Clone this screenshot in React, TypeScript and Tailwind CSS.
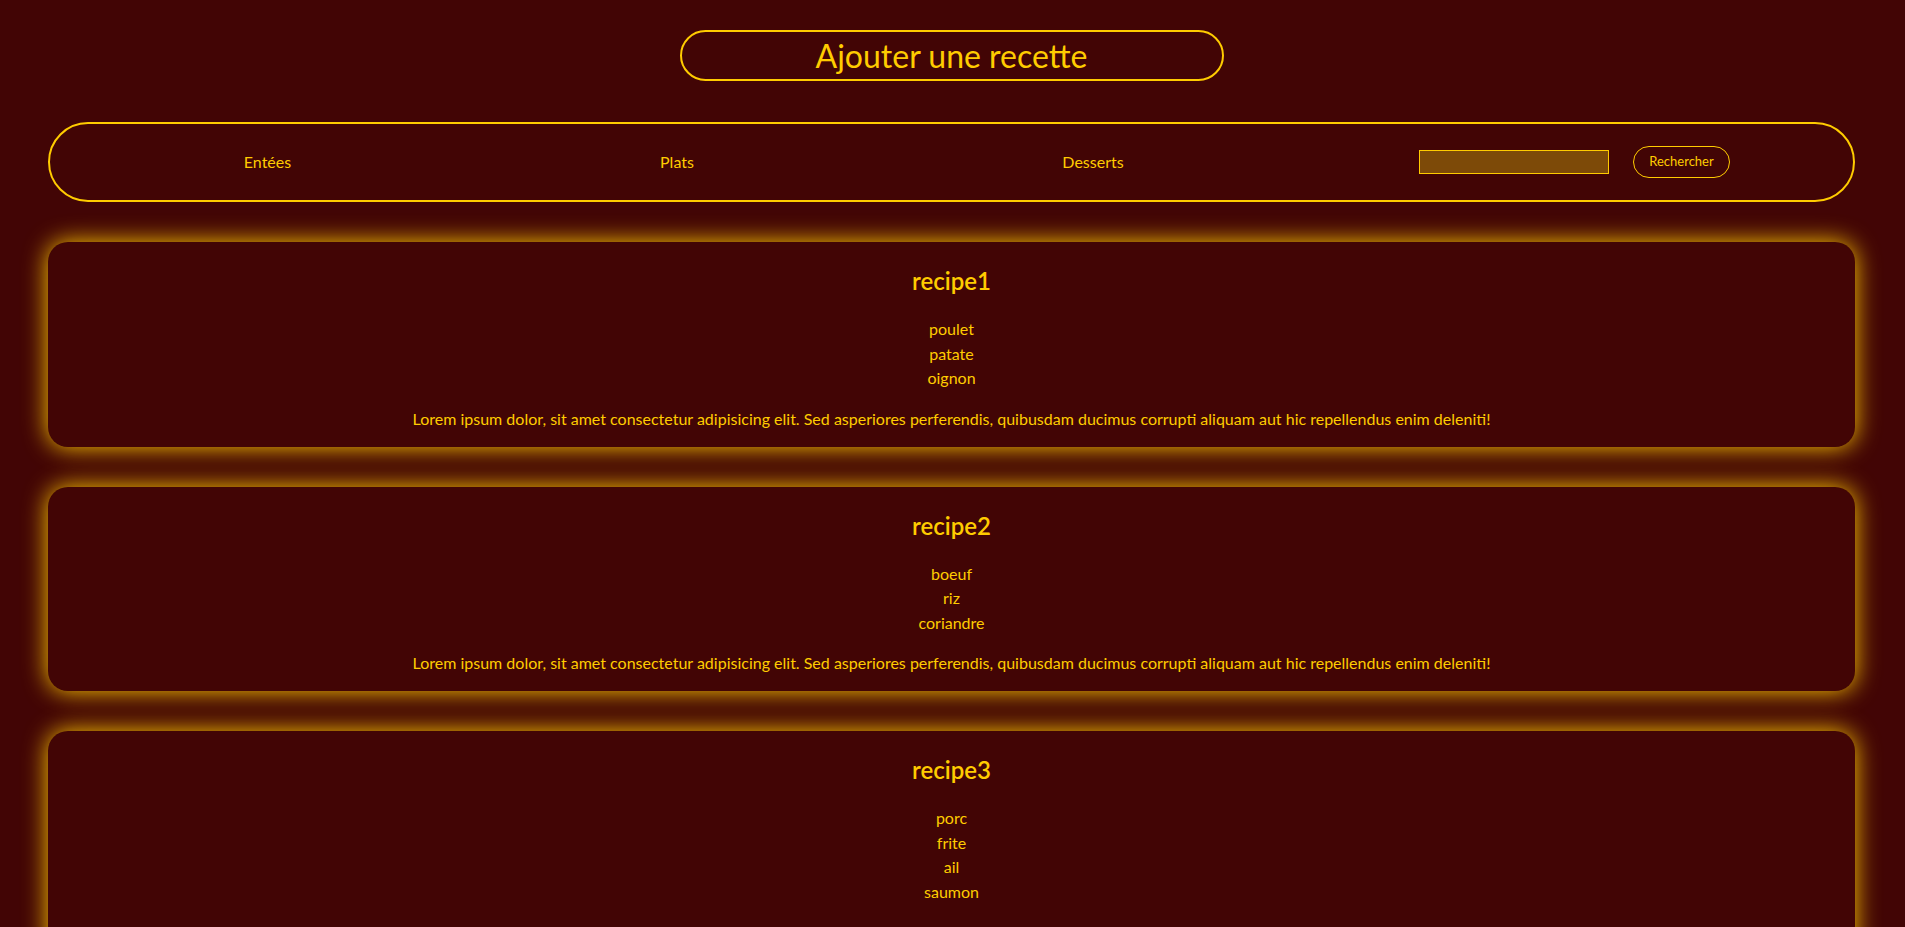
import React from "react";

const recipes = [
  { name: "recipe1", ingredients: ["poulet", "patate", "oignon"] },
  { name: "recipe2", ingredients: ["boeuf", "riz", "coriandre"] },
  { name: "recipe3", ingredients: ["porc", "frite", "ail", "saumon"] },
];

const lorem =
  "Lorem ipsum dolor, sit amet consectetur adipisicing elit. Sed asperiores perferendis, quibusdam ducimus corrupti aliquam aut hic repellendus enim deleniti!";

export default function App() {
  return (
    <div
      className="min-h-screen bg-[#420505] text-[#ffcc00] pb-[60px]"
      style={{ fontFamily: "Lato, 'Noto Sans', sans-serif" }}
    >
      <div className="flex justify-center pt-[30px]">
        <button className="w-[544px] h-[51px] mr-[2px] rounded-full border-2 border-[#ffcc00] text-[32px] leading-none text-[#ffcc00] flex items-center justify-center">
          Ajouter une recette
        </button>
      </div>

      <nav className="ml-[48px] mr-[50px] mt-[41px] h-[80px] rounded-full border-2 border-[#ffcc00] flex items-center">
        <div className="w-[435px] text-center text-[16px]">Entées</div>
        <div className="w-[384px] text-center text-[16px]">Plats</div>
        <div className="w-[448px] text-center text-[16px]">Desserts</div>
        <form className="ml-[102px] flex items-center gap-[24px]" onSubmit={(e) => e.preventDefault()}>
          <input
            type="text"
            className="w-[190px] h-[24px] bg-[#7d4a08] border border-[#ffcc00] outline-none"
          />
          <button
            type="submit"
            className="w-[97px] h-[32px] rounded-full border border-[#ffcc00] text-[13px] text-[#ffcc00]"
          >
            Rechercher
          </button>
        </form>
      </nav>

      <div className="ml-[48px] mr-[50px] mt-[40px] flex flex-col gap-[40px]">
        {recipes.map((r) => (
          <div
            key={r.name}
            className="rounded-[20px] bg-[#420505] shadow-[0_0_25px_#ffcc00] text-center pt-[21px] pb-[16px]"
          >
            <h2 className="text-[24px] leading-[36px] font-semibold">{r.name}</h2>
            <ul className="mt-[18px] text-[16px] leading-[24.5px]">
              {r.ingredients.map((i) => (
                <li key={i}>{i}</li>
              ))}
            </ul>
            <p className="mt-[16px] text-[16px] leading-[24px]">{lorem}</p>
          </div>
        ))}
      </div>
    </div>
  );
}
